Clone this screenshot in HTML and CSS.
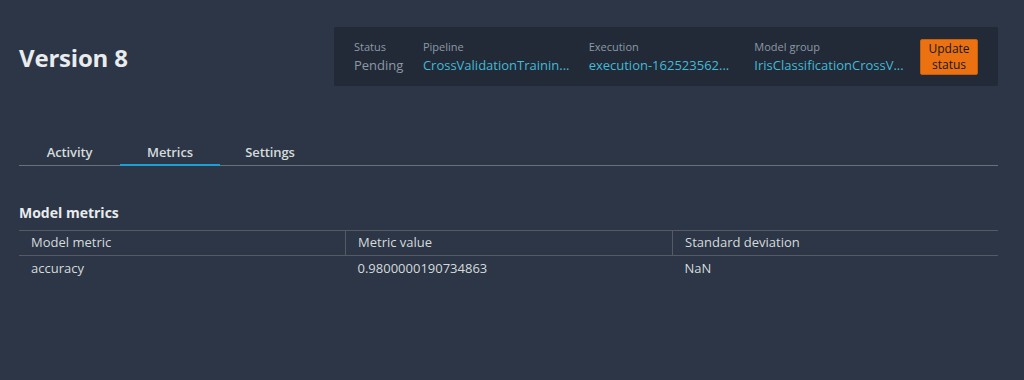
FILE: index.html
```html
<!DOCTYPE html>
<html>
<head>
<meta charset="utf-8">
<link rel="stylesheet" href="styles.css">
</head>
<body>
<div class="page">
  <header class="head">
    <h1 class="title">Version 8</h1>
    <div class="card">
      <div class="field f-status">
        <div class="label">Status</div>
        <div class="value muted">Pending</div>
      </div>
      <div class="field f-pipe">
        <div class="label">Pipeline</div>
        <div class="value link">CrossValidationTrainin...</div>
      </div>
      <div class="field f-exec">
        <div class="label">Execution</div>
        <div class="value link">execution-162523562...</div>
      </div>
      <div class="field f-group">
        <div class="label">Model group</div>
        <div class="value link">IrisClassificationCrossV...</div>
      </div>
      <button class="btn">Update<br>status</button>
    </div>
  </header>
  <nav class="tabs">
    <div class="tab">Activity</div>
    <div class="tab active">Metrics</div>
    <div class="tab">Settings</div>
  </nav>
  <h2 class="section">Model metrics</h2>
  <table class="tbl">
    <thead>
      <tr><th>Model metric</th><th>Metric value</th><th>Standard deviation</th></tr>
    </thead>
    <tbody>
      <tr><td>accuracy</td><td>0.9800000190734863</td><td>NaN</td></tr>
    </tbody>
  </table>
</div>
</body>
</html>
```

FILE: styles.css
```css
html, body {
  margin: 0;
  padding: 0;
  background: #2c3647;
}
body {
  font-family: "Open Sans", "Noto Sans", sans-serif;
  color: #d5dbdb;
  width: 1024px;
  height: 380px;
  overflow: hidden;
}
.page {
  padding: 27px 26px 0 19px;
}
.head {
  display: flex;
  justify-content: space-between;
  align-items: flex-start;
  height: 59px;
}
.title {
  margin: 17px 0 0 0;
  font-size: 24px;
  font-weight: 700;
  color: #e9ebed;
  line-height: 28px;
  letter-spacing: -0.2px;
}
.card {
  background: #212a36;
  border-radius: 2px;
  width: 664px;
  height: 59px;
  box-sizing: border-box;
  display: flex;
  align-items: center;
  padding: 0 20px 0 20px;
}
.field {
  display: flex;
  flex-direction: column;
  gap: 2px;
  margin-top: 0;
}
.f-status { width: 69px; }
.f-pipe { width: 166px; }
.f-exec { width: 166px; }
.f-group { width: 166px; }
.label {
  font-size: 11px;
  color: #8d99a8;
  line-height: 14px;
}
.value {
  font-size: 13px;
  line-height: 18px;
  white-space: nowrap;
}
.muted { color: #8d99a8; }
.link { color: #44b9d6; }
.btn {
  background: #ec7211;
  border: 1px solid #c45f0d;
  border-radius: 2px;
  color: #16191f;
  font-family: inherit;
  font-size: 12px;
  line-height: 16px;
  width: 58px;
  height: 36px;
  padding: 0;
  margin-top: 0;
}
.tabs {
  display: flex;
  margin-top: 50px;
  border-bottom: 1px solid #687078;
  height: 29px;
}
.tab {
  width: 100px;
  text-align: center;
  font-size: 13px;
  font-weight: 600;
  color: #d5dbdb;
  line-height: 16px;
  padding-top: 8px;
  box-sizing: border-box;
  letter-spacing: -0.1px;
}
.tabs .tab:first-child { width: 101px; }
.tab.active {
  border-bottom: 2px solid #1a9fd6;
  height: 30px;
}
.section {
  margin: 38px 0 0 0;
  font-size: 14px;
  font-weight: 700;
  color: #e9ebed;
  line-height: 18px;
}
.tbl {
  margin-top: 8px;
  width: 979px;
  border-collapse: collapse;
  font-size: 13px;
  color: #d5dbdb;
}
.tbl th {
  font-weight: 400;
  text-align: left;
  border-top: 1px solid #545b64;
  border-bottom: 1px solid #545b64;
  padding: 3px 12px 4px 12px;
  line-height: 17px;
  height: 17px;
}
.tbl th + th { border-left: 1px solid #545b64; }
.tbl th:nth-child(1) { width: 302px; }
.tbl th:nth-child(2) { width: 302px; }
.tbl td {
  padding: 4px 12px;
  line-height: 17px;
}
```
